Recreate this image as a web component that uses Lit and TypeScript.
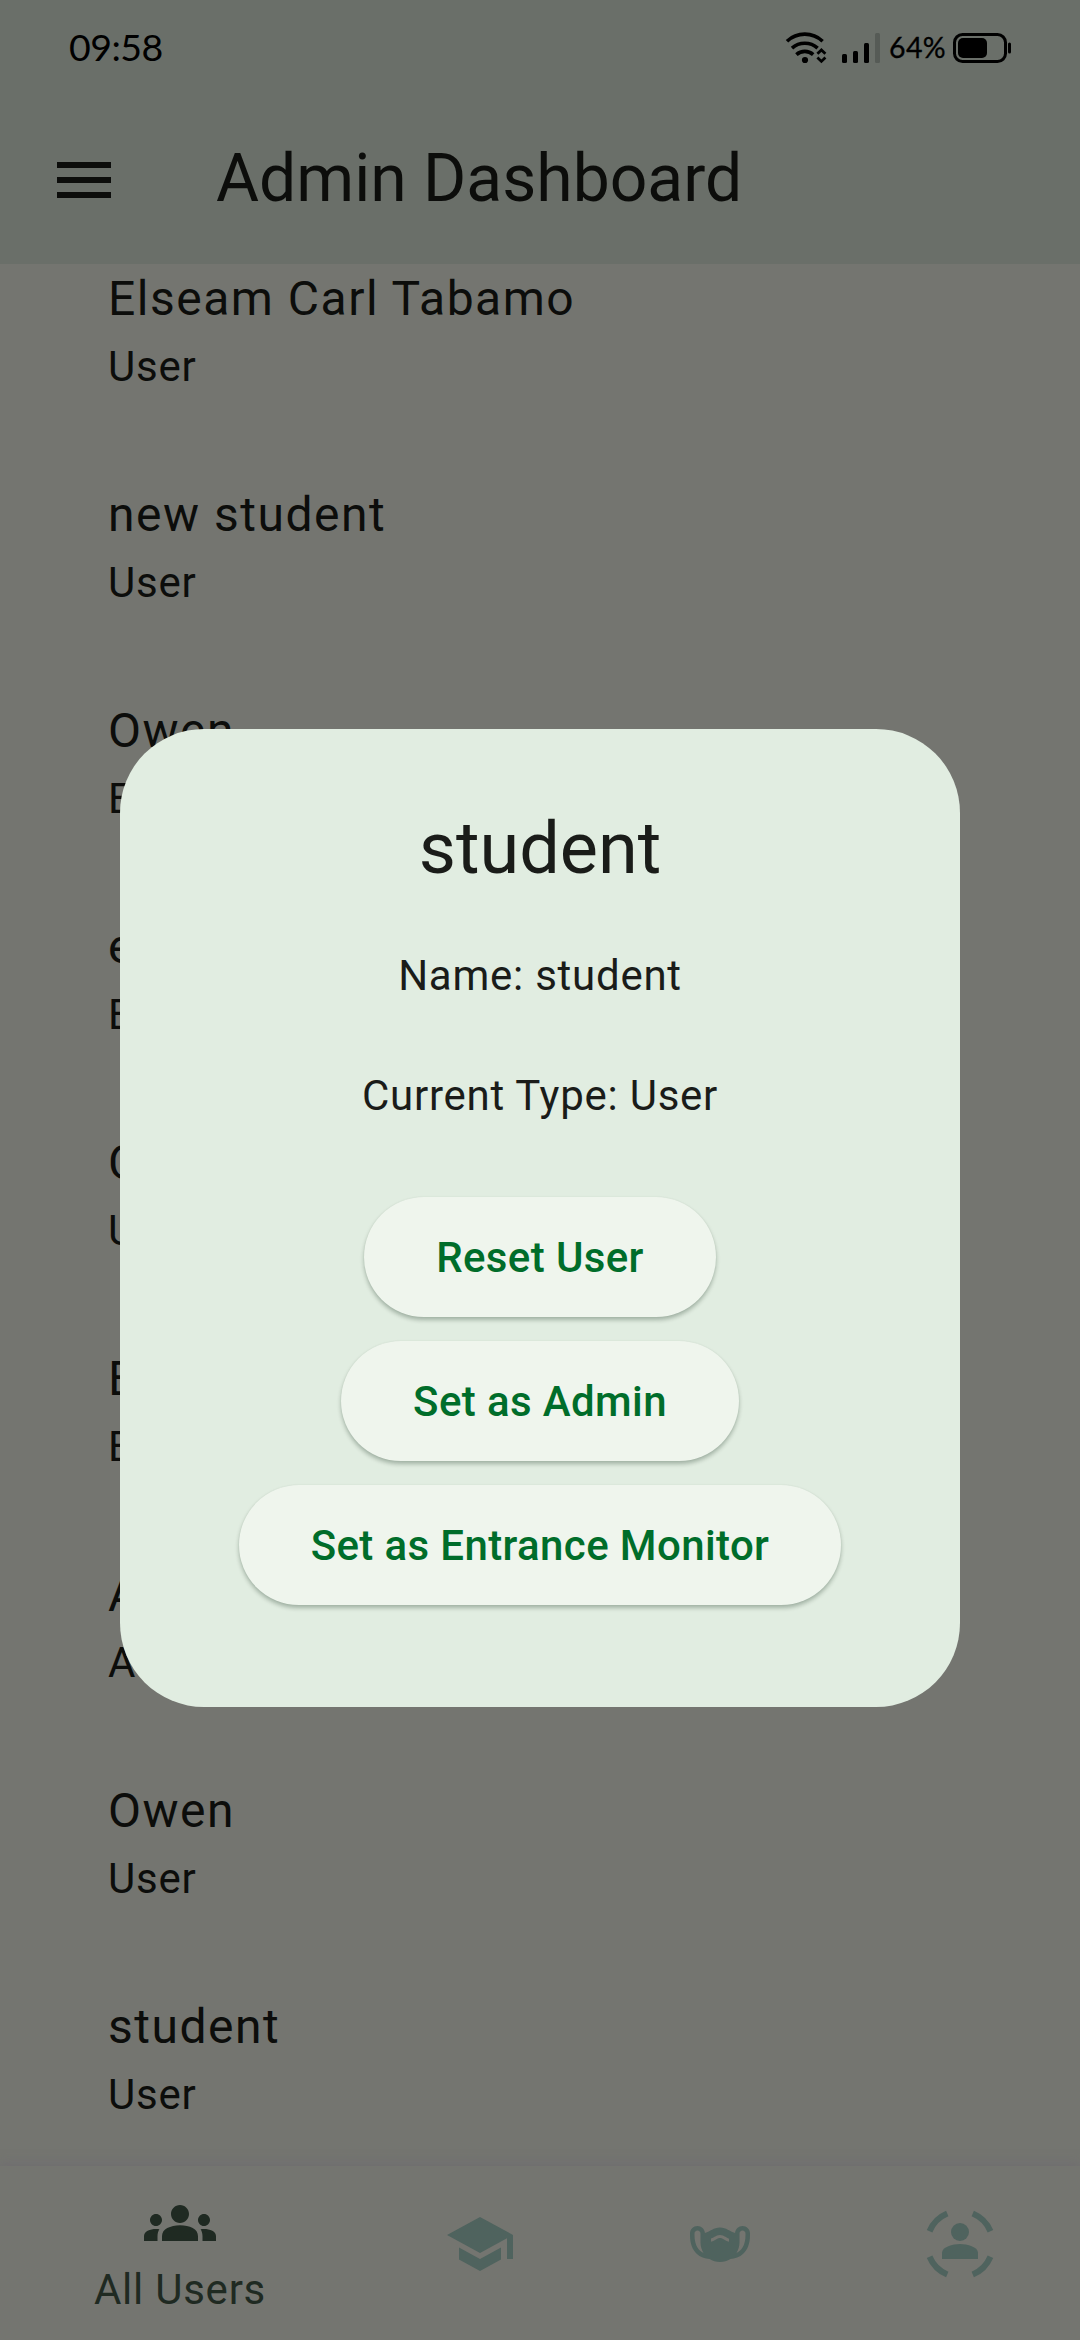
import { LitElement, html, css, svg } from "lit";
import { customElement, state } from "lit/decorators.js";

interface Account {
  name: string;
  role: string;
}

const ACCOUNTS: Account[] = [
  { name: "Elseam Carl Tabamo", role: "User" },
  { name: "new student", role: "User" },
  { name: "Owen", role: "E" },
  { name: "e", role: "E" },
  { name: "C", role: "U" },
  { name: "E", role: "E" },
  { name: "A", role: "A" },
  { name: "Owen", role: "User" },
  { name: "student", role: "User" },
];

const GROUPS = svg`<path d="M4 13c1.1 0 2-.9 2-2s-.9-2-2-2-2 .9-2 2 .9 2 2 2zm1.13 1.1C4.76 14.04 4.39 14 4 14c-.99 0-1.93.21-2.78.58C.48 14.9 0 15.62 0 16.43V18h4.5v-1.61c0-.83.23-1.61.63-2.29zM20 13c1.1 0 2-.9 2-2s-.9-2-2-2-2 .9-2 2 .9 2 2 2zm4 3.43c0-.81-.48-1.53-1.22-1.85C21.93 14.21 20.99 14 20 14c-.39 0-.76.04-1.13.1.4.68.63 1.46.63 2.29V18H24v-1.57zM16.24 13.65c-1.17-.52-2.61-.9-4.24-.9s-3.07.39-4.24.9C6.68 14.13 6 15.21 6 16.39V18h12v-1.61c0-1.18-.68-2.26-1.76-2.74zM9 9c0 1.66 1.34 3 3 3s3-1.34 3-3-1.34-3-3-3-3 1.34-3 3z"/>`;
const SCHOOL = svg`<path d="M5 13.18v4L12 21l7-3.82v-4L12 17l-7-3.82zM12 3L1 9l11 6 9-4.91V17h2V9L12 3z"/>`;
const MASKS = svg`<path d="M19.5 6c-1.31 0-2.37 1.01-2.48 2.3C15.14 7.8 14.18 6.5 12 6.5c-2.19 0-3.14 1.3-5.02 1.8C6.87 7.02 5.81 6 4.5 6 3.12 6 2 7.12 2 8.5V9c0 6 3.6 7.81 6.52 7.98C9.53 17.62 10.72 18 12 18s2.47-.38 3.48-1.02C18.4 16.81 22 15 22 9v-.5C22 7.12 20.88 6 19.5 6zM3.5 9v-.5c0-.55.45-1 1-1s1 .45 1 1v3c0 1.28.38 2.47 1.01 3.48C4.99 14.27 3.5 12.65 3.5 9zm17 0c0 3.65-1.49 5.27-3.01 5.98.64-1.01 1.01-2.2 1.01-3.48v-3c0-.55.45-1 1-1s1 .45 1 1V9zm-9.81 1.48c-.44.26-.96.56-1.69.76V10.2c.48-.17.84-.38 1.18-.58C10.72 9.3 11.23 9 12 9s1.27.3 1.8.62c.34.2.71.42 1.2.59v1.04c-.75-.21-1.26-.51-1.71-.78C12.83 10.2 12.49 10 12 10c-.5 0-.84.2-1.31.48z"/>`;
const PERSON_SCAN = svg`<circle cx="12" cy="8" r="3"/><path d="M12 12c-2.4 0-6 .95-6 2.9V17h12v-2.1C18 12.95 14.4 12 12 12z"/><path fill="none" stroke="currentColor" stroke-width="2" d="M1.85 7.75A11 11 0 0 1 7.75 1.85M16.25 1.85A11 11 0 0 1 22.15 7.75M22.15 16.25A11 11 0 0 1 16.25 22.15M7.75 22.15A11 11 0 0 1 1.85 16.25"/>`;

@customElement("status-bar")
class StatusBar extends LitElement {
  static styles = css`
    :host {
      display: flex;
      justify-content: space-between;
      height: 96px;
      box-sizing: border-box;
      padding: 0 69px;
      color: #000;
      font-family: Lato, "Liberation Sans", sans-serif;
    }
    .clock { font-size: 37.5px; line-height: 94px; letter-spacing: -0.5px; }
    .tray { display: flex; align-items: flex-start; padding-top: 33px; }
    .level {
      flex: none;
      width: 73px;
      padding-left: 9px;
      box-sizing: border-box;
      font-size: 28.5px;
      line-height: 28px;
      letter-spacing: 0.4px;
      -webkit-text-stroke: 0.3px #000;
    }
    svg { display: block; flex: none; }
  `;
  render() {
    return html`
      <span class="clock">09:58</span>
      <div class="tray">
        <svg width="94" height="30" viewBox="0 0 94 30" overflow="visible">
          <g fill="none" stroke="#000" stroke-width="3.6">
            <path d="M1 8.2A26 26 0 0 1 36.6 8.2"/>
            <path d="M6 15.2A19 19 0 0 1 31.6 15.2"/>
            <path d="M10.4 21.6A12.5 12.5 0 0 1 27.2 21.6"/>
            <path stroke-width="2.8" d="M31.4 20.8L35.4 17L39.4 20.8M31.4 24.6L35.4 28.4L39.4 24.6"/>
          </g>
          <circle cx="19" cy="27" r="3.1"/>
          <rect x="56" y="21" width="5" height="9" rx="1.5"/>
          <rect x="67" y="18" width="5" height="12" rx="1.5"/>
          <rect x="78" y="10" width="5" height="20" rx="1.5"/>
          <rect x="89" y="0" width="5" height="30" rx="1.5" fill="#565b56"/>
        </svg>
        <span class="level">64%</span>
        <svg width="58" height="30" viewBox="0 0 58 30">
          <rect x="1.5" y="1.5" width="51" height="27" rx="8" fill="none" stroke="#000" stroke-width="3"/>
          <rect x="5" y="5" width="29" height="20" rx="5"/>
          <rect x="55" y="9.6" width="3" height="11" rx="1.5"/>
        </svg>
      </div>
    `;
  }
}

@customElement("account-row")
class AccountRow extends LitElement {
  static properties = { account: { attribute: false } };
  declare account: Account;
  static styles = css`
    :host {
      display: flex;
      flex-direction: column;
      height: 216px;
      box-sizing: border-box;
      padding: 0 108px;
      color: #0c0d0b;
    }
    .name { font-size: 48px; line-height: 70px; letter-spacing: 1.5px; }
    .role { font-size: 42px; line-height: 66px; letter-spacing: 0.75px; }
  `;
  render() {
    return html`<span class="name">${this.account.name}</span>
      <span class="role">${this.account.role}</span>`;
  }
}

@customElement("user-dialog")
class UserDialog extends LitElement {
  static styles = css`
    :host {
      display: flex;
      flex-direction: column;
      align-items: center;
      width: 840px;
      height: 978px;
      box-sizing: border-box;
      padding-top: 72px;
      border-radius: 84px;
      background: #e1ede1;
      color: #1a1c19;
    }
    h2 { margin: 0 0 49px; font-weight: 400; font-size: 72px; line-height: 96px; }
    p { margin: 0 0 60px; font-size: 42px; line-height: 60px; letter-spacing: 0.75px; }
    .actions { display: flex; flex-direction: column; align-items: center; gap: 24px; padding-top: 11px; }
    button {
      height: 120px;
      padding: 2px 72px 0;
      border: 0;
      border-radius: 60px;
      background: #eff5ed;
      color: #006d2a;
      font: 500 42px/118px Roboto, "Liberation Sans", sans-serif;
      letter-spacing: 0.38px;
      box-shadow: 0 3px 4px rgba(0, 30, 10, 0.28), 0 0 2px rgba(0, 60, 30, 0.06);
    }
  `;
  render() {
    return html`
      <h2>student</h2>
      <p>Name: student</p>
      <p>Current Type: User</p>
      <div class="actions">
        <button>Reset User</button>
        <button>Set as Admin</button>
        <button>Set as Entrance Monitor</button>
      </div>
    `;
  }
}

@customElement("app-root")
class AppRoot extends LitElement {
  @state() private accounts = ACCOUNTS;

  static styles = css`
    :host {
      display: flex;
      flex-direction: column;
      position: relative;
      width: 1080px;
      height: 2340px;
      overflow: hidden;
      background: #747570;
      font-family: Roboto, "Liberation Sans", sans-serif;
    }
    header { flex: none; height: 264px; background: #6a6f69; }
    .toolbar { display: flex; align-items: center; height: 168px; padding-left: 48px; gap: 96px; color: #0c0d0b; }
    .toolbar h1 { margin: 0; padding-bottom: 2px; font-weight: 400; font-size: 66px; line-height: 84px; }
    .icon { display: block; width: 72px; height: 72px; fill: currentColor; }
    main { flex: 1; min-height: 0; overflow: hidden; }
    nav {
      flex: none;
      display: flex;
      height: 174px;
      background: #747570;
      color: #4f635e;
      box-shadow: 0 -2px 10px rgba(105, 100, 112, 0.5);
      z-index: 0;
    }
    .tab { width: 240px; display: flex; flex-direction: column; align-items: center; padding-top: 42px; box-sizing: border-box; }
    .tab.active { width: 360px; padding-top: 21px; color: #1f2a22; }
    .label { font-size: 42px; line-height: 60px; letter-spacing: 0.75px; margin-top: 1px; }
    .overlay { position: absolute; inset: 0; display: flex; justify-content: center; align-items: flex-start; padding-top: 729px; z-index: 1; }
  `;

  render() {
    return html`
      <header>
        <status-bar></status-bar>
        <div class="toolbar">
          <svg class="icon" viewBox="0 0 24 24"><path d="M3 18h18v-2H3v2zm0-5h18v-2H3v2zm0-7v2h18V6H3z"/></svg>
          <h1>Admin Dashboard</h1>
        </div>
      </header>
      <main>
        ${this.accounts.map((a) => html`<account-row .account=${a}></account-row>`)}
      </main>
      <nav>
        <div class="tab active">
          <svg class="icon" viewBox="0 0 24 24">${GROUPS}</svg>
          <span class="label">All Users</span>
        </div>
        <div class="tab"><svg class="icon" viewBox="0 0 24 24">${SCHOOL}</svg></div>
        <div class="tab"><svg class="icon" viewBox="0 0 24 24">${MASKS}</svg></div>
        <div class="tab"><svg class="icon" viewBox="0 0 24 24">${PERSON_SCAN}</svg></div>
      </nav>
      <div class="overlay"><user-dialog></user-dialog></div>
    `;
  }
}
